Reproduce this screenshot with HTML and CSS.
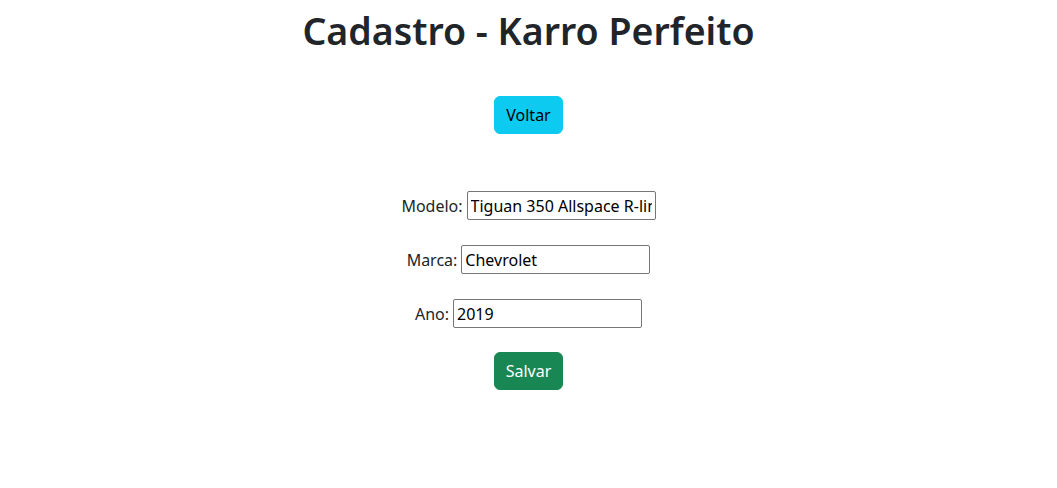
FILE: index.html
```html
<!DOCTYPE html>
<html lang="pt-BR">
<head>
<meta charset="utf-8">
<title>Cadastro - Karro Perfeito</title>
<link rel="stylesheet" href="styles.css">
</head>
<body>
<main class="page">
  <h1 class="title">Cadastro - Karro Perfeito</h1>
  <button class="btn btn-info" type="button">Voltar</button>
  <form class="form">
    <div class="row"><label for="modelo">Modelo:</label><input id="modelo" class="field" type="text" value="Tiguan 350 Allspace R-line"></div>
    <div class="row"><label for="marca">Marca:</label><input id="marca" class="field" type="text" value="Chevrolet"></div>
    <div class="row"><label for="ano">Ano:</label><input id="ano" class="field" type="text" value="2019"></div>
    <button class="btn btn-success" type="button">Salvar</button>
  </form>
</main>
</body>
</html>
```
FILE: styles.css
```css
* { box-sizing: border-box; }
html, body { margin: 0; padding: 0; background: #fff; }
body {
  font-family: "Noto Sans", "Open Sans", sans-serif;
  font-size: 16px;
  line-height: 1.5;
  color: #212529;
}
.page {
  display: flex;
  flex-direction: column;
  align-items: center;
  padding-top: 7px;
}
.title {
  margin: 0;
  font-size: 37.5px;
  font-weight: 600;
  line-height: 48px;
  color: #212529;
}
.btn {
  font-family: inherit;
  font-size: 16px;
  line-height: 24px;
  padding: 6px 11px;
  border: 1px solid transparent;
  border-radius: 6px;
  cursor: pointer;
}
.btn-info {
  margin-top: 41px;
  background: #0dcaf0;
  border-color: #0dcaf0;
  color: #000;
}
.btn-success {
  margin-top: 24px;
  background: #198754;
  border-color: #198754;
  color: #fff;
}
.form {
  display: flex;
  flex-direction: column;
  align-items: center;
  margin-top: 57px;
}
.row {
  height: 29px;
  margin-bottom: 25px;
  display: flex;
  align-items: center;
  gap: 4px;
}
.row:last-of-type { margin-bottom: 0; }
.field {
  width: 189px;
  height: 29px;
  margin: 0;
  padding: 1px 3px;
  font-family: inherit;
  font-size: 16px;
  color: #000;
  border: 1px solid #767676;
  border-radius: 2px;
  background: #fff;
}
```
